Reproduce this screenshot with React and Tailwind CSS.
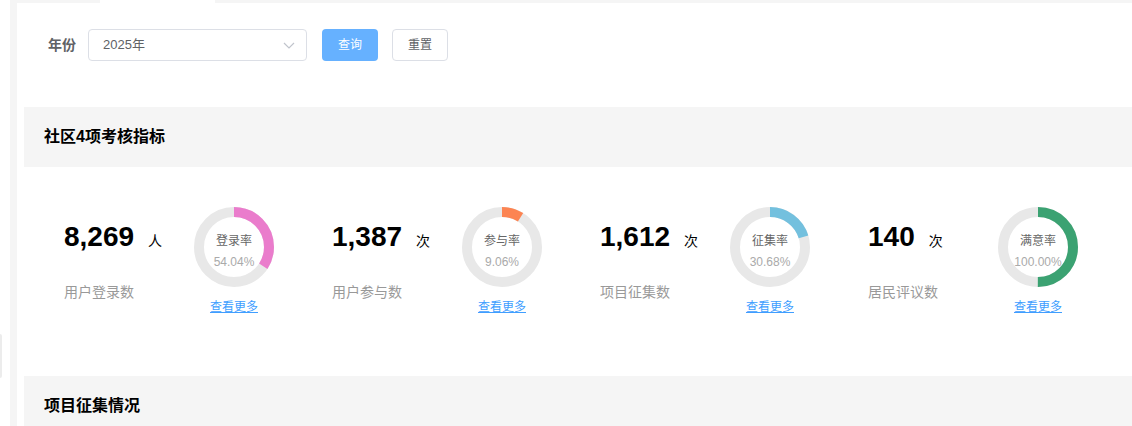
import React from "react";

const CJK = { fontFamily: '"Liberation Sans", "Noto Sans CJK SC", sans-serif' };

const C = 2 * Math.PI * 35;

const stats = [
  { num: "8,269", unit: "人", label: "用户登录数", rate: "登录率", pct: "54.04%", color: "#ea7ccc", deg: 123 },
  { num: "1,387", unit: "次", label: "用户参与数", rate: "参与率", pct: "9.06%", color: "#fc8452", deg: 32 },
  { num: "1,612", unit: "次", label: "项目征集数", rate: "征集率", pct: "30.68%", color: "#73c0de", deg: 73 },
  { num: "140", unit: "次", label: "居民评议数", rate: "满意率", pct: "100.00%", color: "#3ba272", deg: 180 },
];

function Donut({ color, deg, rate, pct }) {
  const len = (C * deg) / 360;
  return (
    <div className="relative w-[80px] h-[80px]">
      <svg width="80" height="80" viewBox="0 0 80 80">
        <circle cx="40" cy="40" r="35" fill="none" stroke="#e8e8e8" strokeWidth="10" />
        <circle
          cx="40"
          cy="40"
          r="35"
          fill="none"
          stroke={color}
          strokeWidth="10"
          strokeDasharray={`${len} ${C}`}
          transform="rotate(-90 40 40)"
        />
      </svg>
      <div className="absolute inset-0 flex flex-col items-center">
        <div className="mt-[26px] text-[12px] leading-[16px] text-[#666]">{rate}</div>
        <div className="mt-[5px] text-[12px] leading-[16px] text-[#aaa]">{pct}</div>
      </div>
    </div>
  );
}

export default function App() {
  return (
    <div className="flex w-[1132px] h-[426px] overflow-hidden bg-white" style={CJK}>
      <div className="w-[10px] shrink-0 flex flex-col">
        <div className="mt-[334px] w-[2px] h-[44px] bg-[#ececec] rounded-r" />
      </div>
      <div className="w-[7px] shrink-0 bg-[#f5f5f5]" />
      <div className="flex-1 flex flex-col">
        <div className="flex h-[3px] shrink-0">
          <div className="w-[83px] bg-[#f5f5f5]" />
          <div className="w-[115px] bg-white" />
          <div className="flex-1 bg-[#f5f5f5]" />
        </div>
        <div className="flex shrink-0 items-center pl-[31px] mt-[26px] h-[32px]">
          <span className="text-[14px] font-bold text-[#606266] w-[28px]">年份</span>
          <div className="ml-[12px] w-[219px] h-[32px] border border-[#dcdfe6] rounded-[4px] flex items-center pl-[14px] pr-[10px]">
            <span className="flex-1 text-[13px] text-[#606266]">2025年</span>
            <svg width="14" height="14" viewBox="0 0 14 14">
              <path d="M2 5 L7 10 L12 5" fill="none" stroke="#c0c4cc" strokeWidth="1.2" />
            </svg>
          </div>
          <button className="ml-[15px] w-[56px] h-[32px] rounded-[4px] bg-[#66b1ff] text-white text-[12px]">查询</button>
          <button className="ml-[14px] w-[56px] h-[32px] rounded-[4px] border border-[#dcdfe6] bg-white text-[#606266] text-[12px]">重置</button>
        </div>
        <div className="ml-[7px] shrink-0 mt-[46px] h-[60px] bg-[#f5f5f5] flex items-center pl-[20px]">
          <span className="text-[16px] font-bold text-black">社区4项考核指标</span>
        </div>
        <div className="ml-[7px] shrink-0 flex pt-[40px] h-[209px]">
          {stats.map((s) => (
            <div key={s.label} className="w-[268px] shrink-0 flex pl-[40px]">
              <div className="w-[130px] pt-[16px]">
                <div className="flex items-baseline h-[28px]">
                  <span className="text-[28px] leading-[28px] font-bold text-black">{s.num}</span>
                  <span className="ml-[14px] text-[14px] text-black">{s.unit}</span>
                </div>
                <div className="mt-[31px] text-[14px] leading-[20px] text-[#999]">{s.label}</div>
              </div>
              <div className="flex flex-col items-center w-[80px]">
                <Donut color={s.color} deg={s.deg} rate={s.rate} pct={s.pct} />
                <a className="mt-[12px] text-[12px] leading-[16px] text-[#409eff] underline">查看更多</a>
              </div>
            </div>
          ))}
        </div>
        <div className="ml-[7px] shrink-0 h-[60px] bg-[#f5f5f5] flex items-center pl-[20px]">
          <span className="text-[16px] font-bold text-black">项目征集情况</span>
        </div>
      </div>
    </div>
  );
}
